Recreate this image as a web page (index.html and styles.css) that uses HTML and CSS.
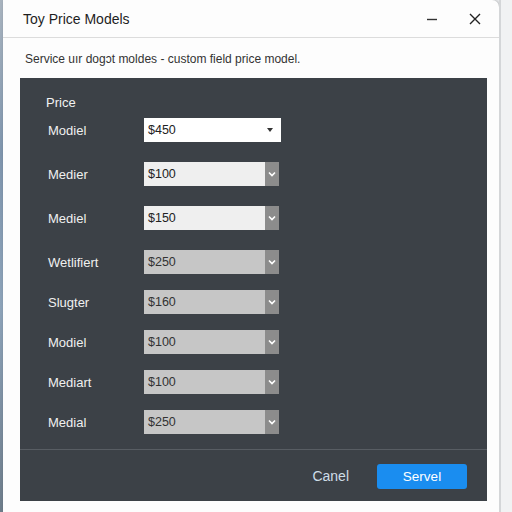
FILE: index.html
```html
<!DOCTYPE html>
<html>
<head>
<meta charset="utf-8">
<link rel="stylesheet" href="styles.css">
</head>
<body>
<div class="desk">
  <div class="edge-left"></div>
  <div class="dialog">
    <div class="titlebar">
      <span class="title">Toy Price Models</span>
      <div class="controls">
        <svg class="ctl" width="14" height="14" viewBox="0 0 14 14"><path d="M2 7.5h10" stroke="#333" stroke-width="1.4"/></svg>
        <svg class="ctl" width="14" height="14" viewBox="0 0 14 14"><path d="M2 2l10 10M12 2L2 12" stroke="#222" stroke-width="1.4"/></svg>
      </div>
    </div>
    <div class="body">
      <p class="subtitle">Service uır dogɔt moldes - custom field price model.</p>
      <div class="panel">
        <div class="fields">
          <div class="heading">Price</div>
          <div class="row">
            <span class="label">Modiel</span>
            <div class="select white"><span class="val">$450</span><span class="caret-small"></span></div>
          </div>
          <div class="row">
            <span class="label">Medier</span>
            <div class="select light"><span class="val">$100</span><span class="btn"><svg width="8" height="6" viewBox="0 0 8 6"><path d="M1 1.5l3 3 3-3" stroke="#fff" stroke-width="1.6" fill="none"/></svg></span></div>
          </div>
          <div class="row">
            <span class="label">Mediel</span>
            <div class="select light"><span class="val">$150</span><span class="btn"><svg width="8" height="6" viewBox="0 0 8 6"><path d="M1 1.5l3 3 3-3" stroke="#fff" stroke-width="1.6" fill="none"/></svg></span></div>
          </div>
          <div class="row short">
            <span class="label">Wetlifiert</span>
            <div class="select grey"><span class="val">$250</span><span class="btn"><svg width="8" height="6" viewBox="0 0 8 6"><path d="M1 1.5l3 3 3-3" stroke="#fff" stroke-width="1.6" fill="none"/></svg></span></div>
          </div>
          <div class="row short">
            <span class="label">Slugter</span>
            <div class="select grey"><span class="val">$160</span><span class="btn"><svg width="8" height="6" viewBox="0 0 8 6"><path d="M1 1.5l3 3 3-3" stroke="#fff" stroke-width="1.6" fill="none"/></svg></span></div>
          </div>
          <div class="row short">
            <span class="label">Modiel</span>
            <div class="select grey"><span class="val">$100</span><span class="btn"><svg width="8" height="6" viewBox="0 0 8 6"><path d="M1 1.5l3 3 3-3" stroke="#fff" stroke-width="1.6" fill="none"/></svg></span></div>
          </div>
          <div class="row short">
            <span class="label">Mediart</span>
            <div class="select grey"><span class="val">$100</span><span class="btn"><svg width="8" height="6" viewBox="0 0 8 6"><path d="M1 1.5l3 3 3-3" stroke="#fff" stroke-width="1.6" fill="none"/></svg></span></div>
          </div>
          <div class="row short">
            <span class="label">Medial</span>
            <div class="select grey"><span class="val">$250</span><span class="btn"><svg width="8" height="6" viewBox="0 0 8 6"><path d="M1 1.5l3 3 3-3" stroke="#fff" stroke-width="1.6" fill="none"/></svg></span></div>
          </div>
        </div>
        <div class="footer">
          <span class="cancel">Canel</span>
          <button class="save">Servel</button>
        </div>
      </div>
    </div>
  </div>
  <div class="edge-right"></div>
</div>
</body>
</html>
```

FILE: styles.css
```css
html, body {
  margin: 0;
  padding: 0;
  width: 512px;
  height: 512px;
  overflow: hidden;
  font-family: "Liberation Sans", Arial, sans-serif;
}
.desk {
  display: flex;
  height: 512px;
  background: #eceef0;
}
.edge-left {
  width: 3px;
  flex: none;
  background: linear-gradient(180deg, #a9b4bf 0%, #7f95ad 30%, #8da3b9 60%, #6d7c8a 100%);
}
.dialog {
  width: 496px;
  flex: none;
  background: #fdfdfd;
  border-top-right-radius: 7px;
  box-shadow: 1px 0 3px rgba(0,0,0,0.25);
  display: flex;
  flex-direction: column;
}
.edge-right {
  flex: 1;
  background: linear-gradient(90deg, #d4d6d8 0, #d4d6d8 2px, #f1f2f3 2px);
}
.titlebar {
  height: 38px;
  border-bottom: 1px solid #dcdcdc;
  display: flex;
  align-items: center;
  padding-left: 20px;
  padding-right: 17px;
  box-sizing: border-box;
}
.title {
  font-size: 14px;
  color: #1e1e1e;
  flex: 1;
  margin-top: 1px;
}
.controls {
  display: flex;
  gap: 29px;
  align-items: center;
}
.ctl { display: block; }
.body {
  padding: 0 12px 0 17px;
  flex: 1;
  display: flex;
  flex-direction: column;
}
.subtitle {
  margin: 0;
  font-size: 12px;
  line-height: 14px;
  color: #333;
  padding: 14px 0 0 5px;
  height: 26px;
}
.panel {
  background: #3c4147;
  flex: none;
  height: 423px;
  display: flex;
  flex-direction: column;
}
.fields {
  padding: 17px 0 0 26px;
  height: 372px;
  box-sizing: border-box;
  border-bottom: 1px solid #585d63;
}
.heading {
  color: #f2f2f2;
  font-size: 13px;
  line-height: 16px;
  margin-bottom: 7px;
}
.row {
  display: flex;
  align-items: center;
  height: 24px;
  margin-bottom: 20px;
}
.row.short { margin-bottom: 16px; }
.label {
  width: 96px;
  padding-left: 2px;
  color: #f0f0f0;
  font-size: 13px;
}
.select {
  width: 135px;
  height: 24px;
  display: flex;
  align-items: center;
  box-sizing: border-box;
}
.val {
  flex: 1;
  font-size: 12.5px;
  color: #222;
  padding-left: 4px;
}
.select.white {
  width: 137px;
  background: #ffffff;
}
.caret-small {
  width: 0;
  height: 0;
  border-left: 3px solid transparent;
  border-right: 3px solid transparent;
  border-top: 4px solid #333;
  margin-right: 8px;
}
.select.light { background: #efefef; }
.select.grey { background: #c6c6c6; }
.select.grey .val { color: #333; }
.btn {
  width: 14px;
  height: 24px;
  background: #8c8c8c;
  display: flex;
  align-items: center;
  justify-content: center;
}
.btn svg { display: block; }
.footer {
  flex: 1;
  display: flex;
  align-items: center;
  justify-content: flex-end;
  padding-right: 20px;
  padding-top: 1px;
}
.cancel {
  color: #cfdde8;
  font-size: 14px;
  margin-right: 28px;
}
.save {
  width: 90px;
  height: 25px;
  border: none;
  border-radius: 3px;
  background: #1a8df0;
  color: #fff;
  font-family: "Liberation Sans", Arial, sans-serif;
  font-size: 13.5px;
  padding: 0;
}
```
